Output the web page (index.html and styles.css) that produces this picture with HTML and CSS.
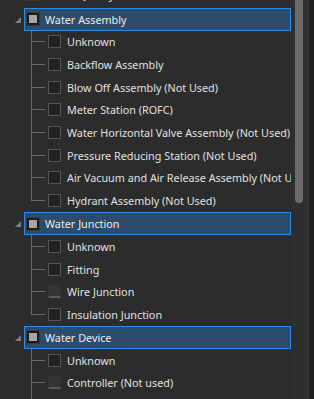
FILE: index.html
```html
<!DOCTYPE html>
<html lang="en">
<head>
  <meta charset="UTF-8" />
  <title>Asset Types</title>
  <link rel="stylesheet" href="styles.css">
</head>
<body>
  <div class="pane">
    <div class="tree">

      <div class="group-row cut">
        <span class="arrow blank"></span>
        <div class="group-box plain">
          <span class="check mixed"></span>
          <span class="label">Water Quality</span>
        </div>
      </div>

      <!-- Water Assembly -->
      <div class="group-row">
        <span class="arrow"></span>
        <div class="group-box">
          <span class="check mixed"></span>
          <span class="label">Water Assembly</span>
        </div>
      </div>
      <div class="item"><span class="gutter"><i></i><i></i></span><span class="check"></span><span class="label">Unknown</span></div>
      <div class="item"><span class="gutter"><i></i><i></i></span><span class="check"></span><span class="label">Backflow Assembly</span></div>
      <div class="item"><span class="gutter"><i></i><i></i></span><span class="check"></span><span class="label">Blow Off Assembly (Not Used)</span></div>
      <div class="item"><span class="gutter"><i></i><i></i></span><span class="check"></span><span class="label">Meter Station (ROFC)</span></div>
      <div class="item"><span class="gutter"><i></i><i></i></span><span class="check"></span><span class="label">Water Horizontal Valve Assembly (Not Used)</span></div>
      <div class="item"><span class="gutter"><i></i><i></i></span><span class="check"></span><span class="label">Pressure Reducing Station (Not Used)</span></div>
      <div class="item"><span class="gutter"><i></i><i></i></span><span class="check"></span><span class="label">Air Vacuum and Air Release Assembly (Not Used)</span></div>
      <div class="item last"><span class="gutter"><i></i><i></i></span><span class="check"></span><span class="label">Hydrant Assembly (Not Used)</span></div>

      <!-- Water Junction -->
      <div class="group-row">
        <span class="arrow"></span>
        <div class="group-box">
          <span class="check mixed"></span>
          <span class="label">Water Junction</span>
        </div>
      </div>
      <div class="item"><span class="gutter"><i></i><i></i></span><span class="check"></span><span class="label">Unknown</span></div>
      <div class="item"><span class="gutter"><i></i><i></i></span><span class="check"></span><span class="label">Fitting</span></div>
      <div class="item"><span class="gutter"><i></i><i></i></span><span class="check off"></span><span class="label">Wire Junction</span></div>
      <div class="item last"><span class="gutter"><i></i><i></i></span><span class="check"></span><span class="label">Insulation Junction</span></div>

      <!-- Water Device -->
      <div class="group-row">
        <span class="arrow"></span>
        <div class="group-box">
          <span class="check mixed"></span>
          <span class="label">Water Device</span>
        </div>
      </div>
      <div class="item"><span class="gutter"><i></i><i></i></span><span class="check"></span><span class="label">Unknown</span></div>
      <div class="item"><span class="gutter"><i></i><i></i></span><span class="check off"></span><span class="label">Controller (Not used)</span></div>
      <div class="item"><span class="gutter"><i></i><i></i></span></div>
    </div>

    <div class="scroll">
      <div class="thumb"></div>
    </div>
    <div class="edge"></div>
  </div>
</body>
</html>
```

FILE: styles.css
```css
html, body {
  margin: 0;
  padding: 0;
  height: 100%;
  overflow: hidden;
  background: #2c2c2c;
}

body {
  font-family: 'Noto Sans', 'Open Sans', sans-serif;
  font-size: 10.8px;
  color: #e0e0e0;
}

.pane {
  display: flex;
  height: 399px;
}

.tree {
  width: 291px;
  flex: none;
  overflow: hidden;
  margin-top: -15.2px;
}

/* category row */
.group-row {
  display: flex;
  align-items: center;
  height: 23px;
  padding-left: 15px;
}

.group-row.cut {
  height: 22.7px;
  box-sizing: border-box;
  padding-bottom: 4px;
}

.arrow {
  width: 0;
  height: 0;
  border-left: 6px solid transparent;
  border-bottom: 6px solid #7c7c7c;
  margin-top: 1px;
  margin-right: 3px;
  flex: none;
}

.arrow.blank {
  border-bottom-color: transparent;
}

.group-box {
  flex: 1;
  height: 100%;
  box-sizing: border-box;
  display: flex;
  align-items: center;
  padding-left: 2px;
  background: #2d4c6c;
  border: 1px solid #2e8ae6;
  white-space: nowrap;
  color: #ececec;
}

.group-box.plain {
  background: transparent;
  border-color: transparent;
}

.group-box .label {
  margin-left: 6px;
}

/* checkboxes */
.check {
  width: 13px;
  height: 13px;
  box-sizing: border-box;
  flex: none;
  border: 1px solid #555;
  background: #222;
}

.check.mixed {
  width: 12px;
  height: 12px;
  border: 2px solid #1b1b1b;
  background: #a6a6a6;
  box-shadow: 0 0 0 1px #3a3a3a;
}

.check.off {
  border: 1px solid #333;
  border-bottom: 2px solid #5a5a5a;
  background: #353535;
}

/* child rows */
.item {
  display: flex;
  align-items: center;
  height: 22.7px;
  padding-left: 31px;
  white-space: nowrap;
}

.gutter {
  width: 14px;
  height: 100%;
  flex: none;
  display: flex;
  flex-direction: column;
  margin-right: 3px;
}

.gutter i {
  flex: 1;
  border-left: 1px solid #6a6a6a;
}

.gutter i:first-child {
  border-bottom: 1px solid #6a6a6a;
}

.item.last .gutter i:last-child {
  border-left-color: transparent;
}

.item .label {
  margin-left: 6px;
}

/* scrollbar */
.scroll {
  width: 17px;
  flex: none;
  background: #2e2e2e;
}

.thumb {
  margin-left: 4px;
  width: 8px;
  height: 203px;
  background: #6b6b6b;
  border-radius: 0 0 4px 4px;
}

.edge {
  flex: 1;
  background: #202020;
  border-left: 1px solid #3d3d3d;
}
```
